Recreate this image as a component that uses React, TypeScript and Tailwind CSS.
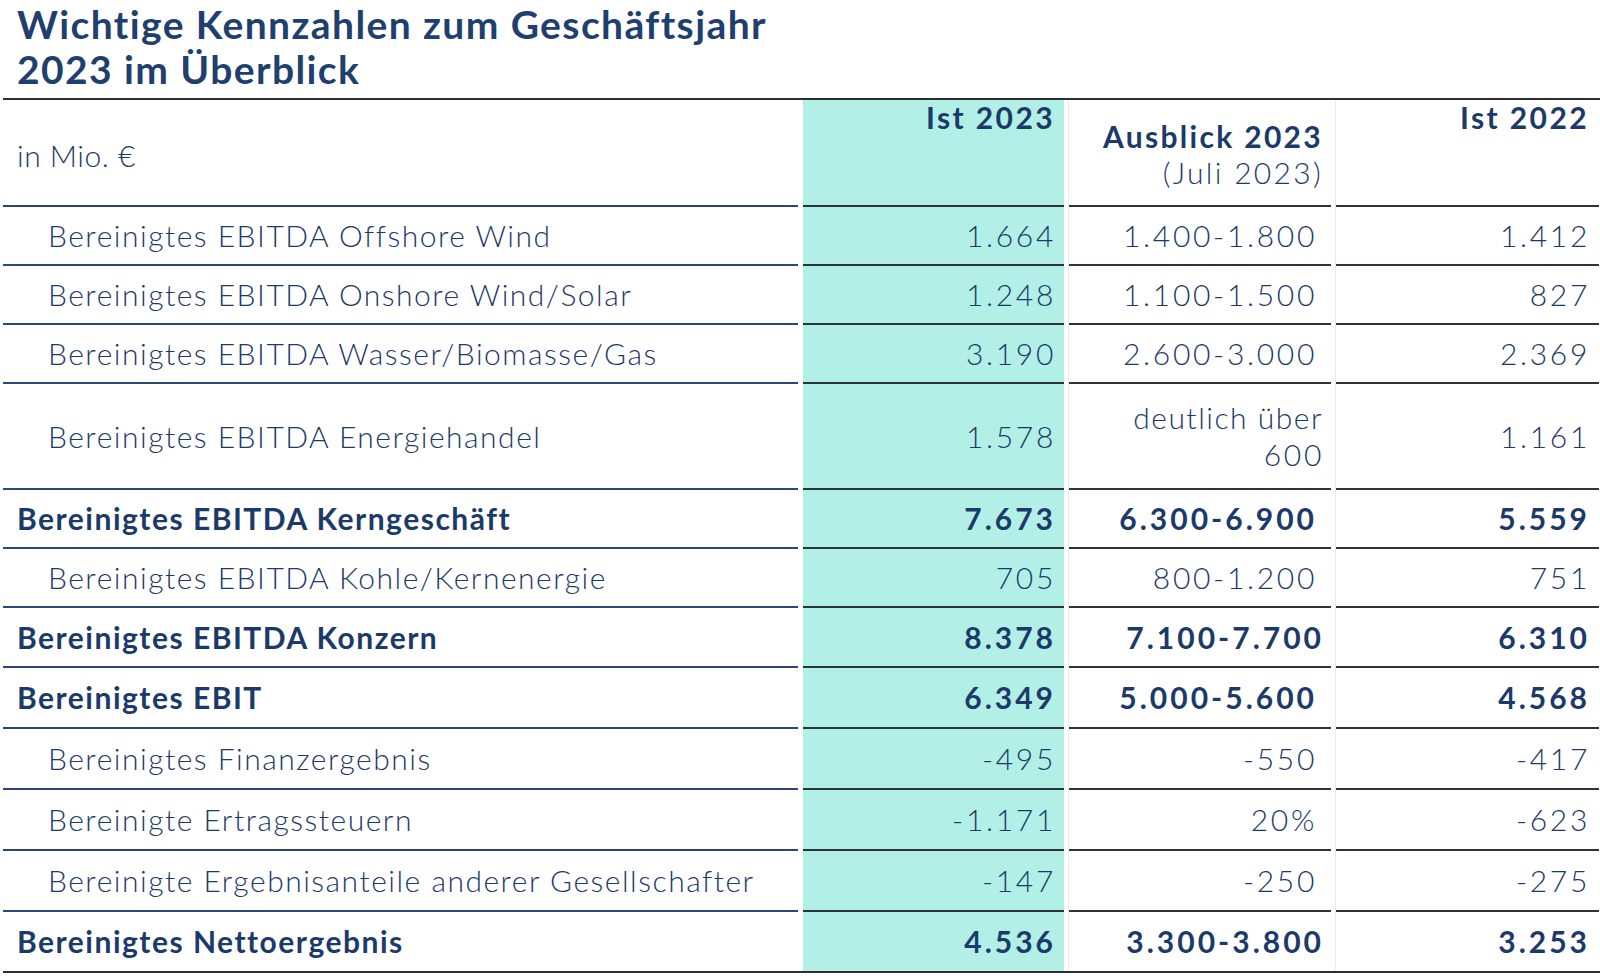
const TEAL = 'bg-[#b2efe6]'

type Row = {
  label: string
  bold?: boolean
  h: string
  ist23: string
  plan: string[]
  planWide?: boolean
  ist22: string
}

const ROWS: Row[] = [
  { label: 'Bereinigtes EBITDA Offshore Wind', h: 'h-[59px]', ist23: '1.664', plan: ['1.400-1.800'], ist22: '1.412' },
  { label: 'Bereinigtes EBITDA Onshore Wind/Solar', h: 'h-[59px]', ist23: '1.248', plan: ['1.100-1.500'], ist22: '827' },
  { label: 'Bereinigtes EBITDA Wasser/Biomasse/Gas', h: 'h-[59px]', ist23: '3.190', plan: ['2.600-3.000'], ist22: '2.369' },
  { label: 'Bereinigtes EBITDA Energiehandel', h: 'h-[106px]', ist23: '1.578', plan: ['deutlich über', '600'], planWide: true, ist22: '1.161' },
  { label: 'Bereinigtes EBITDA Kerngeschäft', bold: true, h: 'h-[59px]', ist23: '7.673', plan: ['6.300-6.900'], ist22: '5.559' },
  { label: 'Bereinigtes EBITDA Kohle/Kernenergie', h: 'h-[59px]', ist23: '705', plan: ['800-1.200'], ist22: '751' },
  { label: 'Bereinigtes EBITDA Konzern', bold: true, h: 'h-[60px]', ist23: '8.378', plan: ['7.100-7.700'], planWide: true, ist22: '6.310' },
  { label: 'Bereinigtes EBIT', bold: true, h: 'h-[61px]', ist23: '6.349', plan: ['5.000-5.600'], ist22: '4.568' },
  { label: 'Bereinigtes Finanzergebnis', h: 'h-[61px]', ist23: '-495', plan: ['-550'], ist22: '-417' },
  { label: 'Bereinigte Ertragssteuern', h: 'h-[61px]', ist23: '-1.171', plan: ['20%'], ist22: '-623' },
  { label: 'Bereinigte Ergebnisanteile anderer Gesellschafter', h: 'h-[61px]', ist23: '-147', plan: ['-250'], ist22: '-275' },
  { label: 'Bereinigtes Nettoergebnis', bold: true, h: 'h-[59px]', ist23: '4.536', plan: ['3.300-3.800'], planWide: true, ist22: '3.253' },
]

function Gap({ line }: { line?: boolean }) {
  return (
    <div className="flex w-[5px] flex-shrink-0">
      <div className="w-[4px]" />
      {line && <div className="w-px bg-[#ebebeb]" />}
    </div>
  )
}

export default function App() {
  return (
    <div
      className="w-[1600px] h-[980px] bg-white text-[#1c3a69] overflow-hidden"
      style={{ fontFamily: 'Lato, "Noto Sans", sans-serif' }}
    >
      {/* Title */}
      <h1 className="pl-[17px] pt-[2px] h-[98px] text-[39px] leading-[45px] font-bold text-[#1f3f6f] tracking-[1.4px]">
        Wichtige Kennzahlen zum Geschäftsjahr
        <br />
        2023 im Überblick
      </h1>

      <div className="ml-[3px] border-t-2 border-[#2e2e2e]">
        {/* Header row */}
        <div className="flex h-[107px] text-[30px]">
          <div className="w-[795px] flex items-center pl-[14px] pt-[6px] border-b-2 border-[#2b4677] font-light tracking-[0.5px]">
            in Mio. €
          </div>
          <Gap />
          <div className={`w-[261px] ${TEAL} border-b-2 border-[#2a3636] text-right pr-[9px] pt-[2px] leading-[30px] font-bold tracking-[2.4px]`}>
            Ist 2023
          </div>
          <Gap line />
          <div className="w-[262px] border-b-2 border-[#2a3636] text-right pr-[8px] pt-[18px] leading-[36px] tracking-[2.3px]">
            <div className="font-bold">Ausblick 2023</div>
            <div className="font-light">(Juli 2023)</div>
          </div>
          <Gap line />
          <div className="w-[263px] border-b-2 border-[#2a3636] text-right pr-[10px] pt-[2px] leading-[30px] font-bold tracking-[2.4px]">
            Ist 2022
          </div>
        </div>

        {/* Body rows */}
        {ROWS.map((r, i) => {
          const last = i === ROWS.length - 1
          const w = r.bold ? 'font-bold' : 'font-light'
          const num = r.bold ? 'tracking-[3px]' : 'tracking-[2.7px]'
          const left = last ? '' : 'border-b-2 border-[#2b4677]'
          const data = last ? '' : 'border-b-2 border-[#2a3636]'
          return (
            <div key={r.label} className={`flex ${r.h} text-[30px] leading-[37px]`}>
              <div
                className={`w-[795px] flex items-center ${r.bold ? 'pl-[14px] tracking-[1.5px]' : 'pl-[45px] tracking-[1.5px]'} ${left} ${w}`}
              >
                {r.label}
              </div>
              <Gap />
              <div className={`w-[261px] ${TEAL} flex items-center justify-end pr-[8px] ${num} ${data} ${w}`}>
                {r.ist23}
              </div>
              <Gap line />
              <div
                className={`w-[262px] flex flex-col justify-center items-end text-right ${r.planWide ? 'pr-[7px]' : 'pr-[14px]'} ${num} ${data} ${w}`}
              >
                {r.plan.map((p) => (
                  <div key={p} className={p === 'deutlich über' ? 'tracking-[1.5px] mr-[1px]' : ''}>
                    {p}
                  </div>
                ))}
              </div>
              <Gap line />
              <div className={`w-[263px] flex items-center justify-end pr-[9px] ${num} ${data} ${w}`}>
                {r.ist22}
              </div>
            </div>
          )
        })}
        <div className="h-[2px] bg-[#2e2e2e]" />
      </div>
    </div>
  )
}
